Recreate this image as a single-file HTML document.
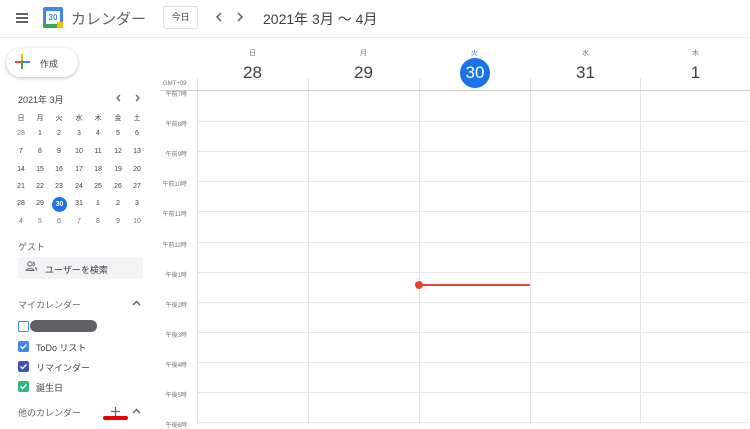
<!DOCTYPE html>
<html><head><meta charset="utf-8"><style>
*{margin:0;padding:0;box-sizing:border-box}
body{width:750px;height:424px;overflow:hidden;background:#fff;font-family:"Liberation Sans","Noto Sans CJK JP",sans-serif;color:#3c4043;position:relative}
.a{position:absolute}
.mini span{position:absolute;width:20px;text-align:center;font-size:7px;color:#3c4043}
.hl{position:absolute;left:197px;right:0;height:1px;background:#e8e8e8}
.vl{position:absolute;top:91px;bottom:0;width:1px;background:#e4e4e4}
.lab{position:absolute;right:563px;font-size:6px;color:#70757a;white-space:nowrap}
.dow{position:absolute;width:111px;text-align:center;font-size:7px;color:#70757a;top:48px}
.dn{position:absolute;width:111px;text-align:center;font-size:17px;color:#3c4043;top:63px}
.cb{position:absolute;left:18px;width:11px;height:11px;border-radius:2px}
.cb svg{position:absolute;left:1px;top:1px}
.lt{position:absolute;left:36px;font-size:9px;color:#3c4043}
</style></head><body>
<div class="a" style="left:16px;top:13px;width:12px;height:1.5px;background:#5f6368;box-shadow:0 4px 0 #5f6368,0 8px 0 #5f6368"></div>
<div class="a" style="left:43px;top:7px;width:20px;height:21px;border-radius:2px;background:#4285f4"></div>
<div class="a" style="left:46px;top:11px;width:14px;height:13px;background:#fff;color:#4285f4;font-size:8px;text-align:center;line-height:13px;font-weight:bold">30</div>
<div class="a" style="left:57px;top:22px;width:6px;height:6px;background:#fbbc04"></div>
<div class="a" style="left:43px;top:24px;width:14px;height:4px;background:#34a853;border-radius:0 0 0 2px"></div>
<div class="a" style="left:71px;top:8px;font-size:15px;color:#5f6368">カレンダー</div>
<div class="a" style="left:163px;top:6px;width:35px;height:23px;border:1px solid #dadce0;border-radius:3px;font-size:9px;text-align:center;line-height:21px;color:#3c4043">今日</div>
<svg class="a" style="left:215px;top:12px" width="8" height="10"><path d="M6 1L2 5l4 4" stroke="#5f6368" stroke-width="1.5" fill="none"/></svg>
<svg class="a" style="left:236px;top:12px" width="8" height="10"><path d="M2 1l4 4-4 4" stroke="#5f6368" stroke-width="1.5" fill="none"/></svg>
<div class="a" style="left:263px;top:9px;font-size:14px;color:#3c4043">2021年 3月 ～ 4月</div>
<div class="a" style="left:0;top:37px;width:750px;height:1px;background:#eee"></div>
<div class="a" style="left:6px;top:48px;width:72px;height:29px;border-radius:15px;box-shadow:0 1px 3px rgba(60,64,67,.35);background:#fff"></div>
<div class="a" style="left:15px;top:61px;width:15px;height:2px;background:linear-gradient(90deg,#ea4335 50%,#4285f4 50%)"></div>
<div class="a" style="left:21px;top:54px;width:2px;height:15px;background:linear-gradient(#fbbc04 45%,#34a853 45%)"></div>
<div class="a" style="left:40px;top:57px;font-size:9px">作成</div>
<div class="a" style="left:18px;top:93px;font-size:9px">2021年 3月</div>
<svg class="a" style="left:115px;top:94px" width="7" height="8"><path d="M5 1L2 4l3 3" stroke="#5f6368" stroke-width="1.3" fill="none"/></svg>
<svg class="a" style="left:134px;top:94px" width="7" height="8"><path d="M2 1l3 3-3 3" stroke="#5f6368" stroke-width="1.3" fill="none"/></svg>
<div class="mini">
<span style="left:11px;top:113px">日</span><span style="left:30px;top:113px">月</span><span style="left:49px;top:113px">火</span><span style="left:69px;top:113px">水</span><span style="left:88px;top:113px">木</span><span style="left:108px;top:113px">金</span><span style="left:127px;top:113px">土</span>
<span style="left:11px;top:130px;color:#70757a">28</span><span style="left:30px;top:130px">1</span><span style="left:49px;top:130px">2</span><span style="left:69px;top:130px">3</span><span style="left:88px;top:130px">4</span><span style="left:108px;top:130px">5</span><span style="left:127px;top:130px">6</span>
<span style="left:11px;top:148px">7</span><span style="left:30px;top:148px">8</span><span style="left:49px;top:148px">9</span><span style="left:69px;top:148px">10</span><span style="left:88px;top:148px">11</span><span style="left:108px;top:148px">12</span><span style="left:127px;top:148px">13</span>
<span style="left:11px;top:166px">14</span><span style="left:30px;top:166px">15</span><span style="left:49px;top:166px">16</span><span style="left:69px;top:166px">17</span><span style="left:88px;top:166px">18</span><span style="left:108px;top:166px">19</span><span style="left:127px;top:166px">20</span>
<span style="left:11px;top:183px">21</span><span style="left:30px;top:183px">22</span><span style="left:49px;top:183px">23</span><span style="left:69px;top:183px">24</span><span style="left:88px;top:183px">25</span><span style="left:108px;top:183px">26</span><span style="left:127px;top:183px">27</span>
<span style="left:11px;top:200px">28</span><span style="left:30px;top:200px">29</span><span style="left:69px;top:200px">31</span><span style="left:88px;top:200px">1</span><span style="left:108px;top:200px">2</span><span style="left:127px;top:200px">3</span>
<span style="left:11px;top:218px;color:#70757a">4</span><span style="left:30px;top:218px;color:#70757a">5</span><span style="left:49px;top:218px;color:#70757a">6</span><span style="left:69px;top:218px;color:#70757a">7</span><span style="left:88px;top:218px;color:#70757a">8</span><span style="left:108px;top:218px;color:#70757a">9</span><span style="left:127px;top:218px;color:#70757a">10</span>
</div>
<div class="a" style="left:52px;top:197px;width:15px;height:15px;border-radius:50%;background:#1a73e8;color:#fff;font-size:7px;font-weight:bold;text-align:center;line-height:15px">30</div>
<div class="a" style="left:18px;top:240px;font-size:9px;color:#5f6368">ゲスト</div>
<div class="a" style="left:18px;top:257px;width:125px;height:22px;background:#f1f3f4;border-radius:3px"></div>
<svg class="a" style="left:25px;top:261px" width="12" height="10" viewBox="0 0 12 10"><circle cx="5" cy="3" r="2.2" fill="none" stroke="#5f6368" stroke-width="1"/><path d="M1 9.5c0-2.5 8-2.5 8 0z" fill="none" stroke="#5f6368"/><path d="M8 1a2.2 2.2 0 0 1 0 4M10 6.5c1 .5 1.5 1.5 1.5 3" fill="none" stroke="#5f6368"/></svg>
<div class="a" style="left:45px;top:263px;font-size:9px">ユーザーを検索</div>
<div class="a" style="left:18px;top:298px;font-size:9px;color:#5f6368">マイカレンダー</div>
<svg class="a" style="left:132px;top:300px" width="9" height="6"><path d="M1 5l3.5-3.5L8 5" stroke="#5f6368" stroke-width="1.5" fill="none"/></svg>
<div class="cb" style="top:321px;border:1.5px solid #4285f4"></div>
<div class="a" style="left:30px;top:320px;width:67px;height:12px;border-radius:6px;background:#5f6164"></div>
<div class="cb" style="top:341px;background:#4285f4"><svg width="9" height="9"><path d="M1.5 4.5l2 2 4-4" stroke="#fff" stroke-width="1.4" fill="none"/></svg></div>
<div class="lt" style="top:341px">ToDo リスト</div>
<div class="cb" style="top:361px;background:#3f51b5"><svg width="9" height="9"><path d="M1.5 4.5l2 2 4-4" stroke="#fff" stroke-width="1.4" fill="none"/></svg></div>
<div class="lt" style="top:361px">リマインダー</div>
<div class="cb" style="top:381px;background:#33b679"><svg width="9" height="9"><path d="M1.5 4.5l2 2 4-4" stroke="#fff" stroke-width="1.4" fill="none"/></svg></div>
<div class="lt" style="top:381px">誕生日</div>
<div class="a" style="left:18px;top:406px;font-size:9px;color:#5f6368">他のカレンダー</div>
<svg class="a" style="left:110px;top:406px" width="11" height="11"><path d="M5.5 1v9M1 5.5h9" stroke="#5f6368" stroke-width="1.2"/></svg>
<div class="a" style="left:103px;top:416px;width:25px;height:4px;border-radius:2px;background:#e00"></div>
<svg class="a" style="left:132px;top:408px" width="9" height="6"><path d="M1 5l3.5-3.5L8 5" stroke="#5f6368" stroke-width="1.5" fill="none"/></svg>
<div class="dow" style="left:197px">日</div><div class="dn" style="left:197px">28</div>
<div class="dow" style="left:308px">月</div><div class="dn" style="left:308px">29</div>
<div class="dow" style="left:419px;color:#1a73e8">火</div>
<div class="a" style="left:460px;top:58px;width:30px;height:30px;border-radius:50%;background:#1a73e8;color:#fff;font-size:17px;text-align:center;line-height:30px">30</div>
<div class="dow" style="left:530px">水</div><div class="dn" style="left:530px">31</div>
<div class="dow" style="left:640px">木</div><div class="dn" style="left:640px">1</div>
<div class="a" style="left:163px;top:81px;font-size:6px;color:#70757a">GMT+09</div>
<div class="a" style="left:197px;top:78px;width:1px;height:13px;background:#e4e4e4"></div>
<div class="a" style="left:308px;top:78px;width:1px;height:13px;background:#e4e4e4"></div>
<div class="a" style="left:419px;top:78px;width:1px;height:13px;background:#e4e4e4"></div>
<div class="a" style="left:530px;top:78px;width:1px;height:13px;background:#e4e4e4"></div>
<div class="a" style="left:640px;top:78px;width:1px;height:13px;background:#e4e4e4"></div>
<div class="a" style="left:160px;top:90px;width:590px;height:1px;background:#ccc"></div>
<div class="vl" style="left:197px"></div><div class="vl" style="left:308px"></div><div class="vl" style="left:419px"></div><div class="vl" style="left:530px"></div><div class="vl" style="left:640px"></div>
<div class="hl" style="top:121px"></div><div class="hl" style="top:151px"></div><div class="hl" style="top:181px"></div><div class="hl" style="top:211px"></div><div class="hl" style="top:242px"></div><div class="hl" style="top:272px"></div><div class="hl" style="top:302px"></div><div class="hl" style="top:332px"></div><div class="hl" style="top:362px"></div><div class="hl" style="top:392px"></div><div class="hl" style="top:422px"></div>
<div class="lab" style="top:89px">午前7時</div>
<div class="lab" style="top:119px">午前8時</div><div class="lab" style="top:149px">午前9時</div><div class="lab" style="top:179px">午前10時</div><div class="lab" style="top:209px">午前11時</div><div class="lab" style="top:240px">午前12時</div><div class="lab" style="top:270px">午後1時</div><div class="lab" style="top:300px">午後2時</div><div class="lab" style="top:330px">午後3時</div><div class="lab" style="top:360px">午後4時</div><div class="lab" style="top:390px">午後5時</div><div class="lab" style="top:420px">午後6時</div>
<div class="a" style="left:419px;top:284px;width:111px;height:2px;background:#ea4335"></div>
<div class="a" style="left:415px;top:281px;width:8px;height:8px;border-radius:50%;background:#ea4335"></div>
</body></html>
